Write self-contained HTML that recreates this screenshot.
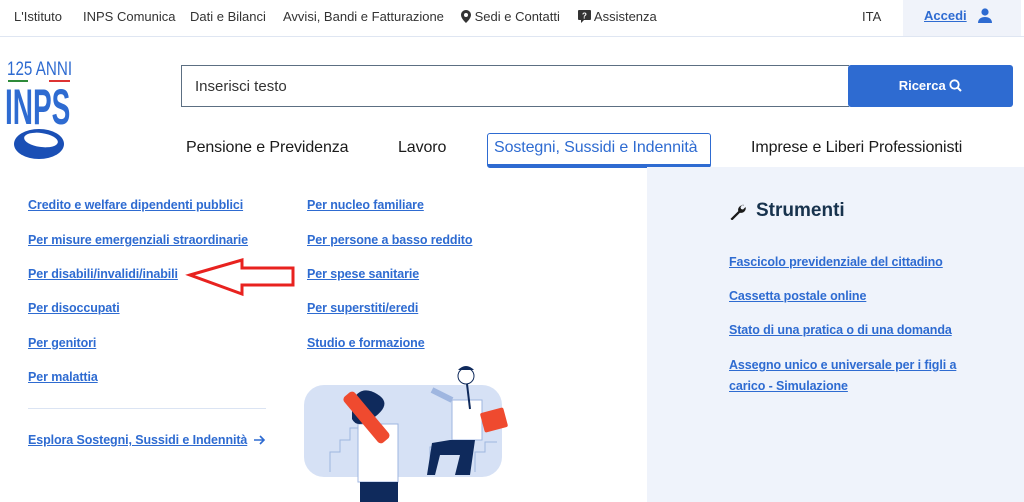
<!DOCTYPE html>
<html><head><meta charset="utf-8"><style>
*{margin:0;padding:0;box-sizing:border-box}
body{width:1024px;height:502px;overflow:hidden;background:#fff;font-family:"Liberation Sans",sans-serif;position:relative;color:#1a1a1a}
.a{position:absolute;white-space:nowrap}
.top{font-size:13px;color:#333;top:9px}
.lk{font-size:12.5px;font-weight:bold;color:#2e6bd1;text-decoration:underline;letter-spacing:-0.1px}
.nav{font-size:16px;color:#1a1a1a;top:139px;letter-spacing:-0.1px}
</style></head><body>
<div class="a" style="left:0;top:36px;width:1024px;height:1px;background:#dfe6f2"></div>
<div class="a" style="left:903px;top:0;width:118px;height:36px;background:#f0f3fa"></div>
<div class="a top" style="left:14px">L'Istituto</div>
<div class="a top" style="left:83px">INPS Comunica</div>
<div class="a top" style="left:190px">Dati e Bilanci</div>
<div class="a top" style="left:283px">Avvisi, Bandi e Fatturazione</div>
<div class="a top" style="left:461px"><svg width="10" height="13" viewBox="0 0 10 13" style="vertical-align:-2px"><path d="M5 0C2.2 0 0 2.2 0 5c0 3.5 5 8 5 8s5-4.5 5-8C10 2.2 7.8 0 5 0zm0 7a2 2 0 110-4 2 2 0 010 4z" fill="#333"/></svg> Sedi e Contatti</div>
<div class="a top" style="left:578px"><svg width="13" height="13" viewBox="0 0 13 13" style="vertical-align:-2px"><path d="M1 0h11a1 1 0 011 1v8a1 1 0 01-1 1H6l-3 3v-3H1a1 1 0 01-1-1V1a1 1 0 011-1z" fill="#333"/><text x="6.5" y="8.5" font-size="8" fill="#fff" text-anchor="middle" font-weight="bold">?</text></svg> Assistenza</div>
<div class="a top" style="left:862px">ITA</div>
<div class="a" style="left:924px;top:8px;font-size:13px;font-weight:bold;color:#2e6bd1;text-decoration:underline">Accedi</div>
<svg class="a" style="left:978px;top:8px" width="14" height="15" viewBox="0 0 14 15"><circle cx="7" cy="4" r="3.6" fill="#2e6bd1"/><path d="M0 15c0-4 3-6 7-6s7 2 7 6z" fill="#2e6bd1"/></svg>
<!-- logo -->
<div class="a" style="left:7px;top:60px;font-size:19px;line-height:19px;color:#2e6bd1;transform:scaleX(0.8);transform-origin:left">125 ANNI</div>
<div class="a" style="left:8px;top:80px;width:20px;height:2px;background:#2e8b3a"></div>
<div class="a" style="left:49px;top:80px;width:21px;height:2px;background:#d33"></div>
<div class="a" style="left:5px;top:82px;font-size:50px;font-weight:bold;color:#2e6bd1;line-height:50px;transform:scaleX(0.56);transform-origin:left">INPS</div>
<svg class="a" style="left:12px;top:127px" width="54" height="35" viewBox="0 0 54 35"><ellipse cx="27" cy="17" rx="25" ry="15" fill="#1a4fb5"/><ellipse cx="29" cy="13" rx="17" ry="7" fill="#fff" transform="rotate(8 29 13)"/></svg>
<!-- search -->
<div class="a" style="left:181px;top:65px;width:668px;height:42px;border:1px solid #5c6f82;border-right:none;font-size:15px;color:#333;padding:12px 0 0 13px">Inserisci testo</div>
<div class="a" style="left:848px;top:65px;width:165px;height:42px;background:#2e6bd1;border-radius:3px;color:#fff;font-weight:bold;font-size:13px;text-align:center;padding-top:13px">Ricerca <svg width="13" height="13" viewBox="0 0 13 13" style="vertical-align:-2px"><circle cx="5.5" cy="5.5" r="4.2" stroke="#fff" stroke-width="1.8" fill="none"/><path d="M8.5 8.5l3.5 3.5" stroke="#fff" stroke-width="2"/></svg></div>
<!-- nav -->
<div class="a nav" style="left:186px">Pensione e Previdenza</div>
<div class="a nav" style="left:398px">Lavoro</div>
<div class="a" style="left:487px;top:133px;width:224px;height:35px;border:1px solid #2e6bd1;border-radius:3px;border-bottom:4px solid #2e6bd1"></div>
<div class="a nav" style="left:494px;color:#2e6bd1">Sostegni, Sussidi e Indennità</div>
<div class="a nav" style="left:751px">Imprese e Liberi Professionisti</div>
<!-- right panel -->
<div class="a" style="left:647px;top:167px;width:377px;height:335px;background:#eff3fb"></div>
<svg class="a" style="left:729px;top:203px" width="17" height="17" viewBox="0 0 17 17"><path d="M15 2.5a4.5 4.5 0 00-5.7 5.6L1.5 15.9l1.6 1.6 7.8-7.8A4.5 4.5 0 0016.5 4l-2.5 2.5-2-0.5-.5-2L14 1.5z" fill="#1a1a1a"/></svg>
<div class="a" style="left:756px;top:200px;font-size:19px;font-weight:bold;color:#17324d">Strumenti</div>
<div class="a lk" style="left:729px;top:255px">Fascicolo previdenziale del cittadino</div>
<div class="a lk" style="left:729px;top:289px">Cassetta postale online</div>
<div class="a lk" style="left:729px;top:323px">Stato di una pratica o di una domanda</div>
<div class="a lk" style="left:729px;top:358px">Assegno unico e universale per i figli a</div>
<div class="a lk" style="left:729px;top:379px">carico - Simulazione</div>
<!-- left links -->
<div class="a lk" style="left:28px;top:198px">Credito e welfare dipendenti pubblici</div>
<div class="a lk" style="left:28px;top:233px">Per misure emergenziali straordinarie</div>
<div class="a lk" style="left:28px;top:267px">Per disabili/invalidi/inabili</div>
<div class="a lk" style="left:28px;top:301px">Per disoccupati</div>
<div class="a lk" style="left:28px;top:336px">Per genitori</div>
<div class="a lk" style="left:28px;top:370px">Per malattia</div>
<div class="a" style="left:28px;top:408px;width:238px;height:1px;background:#dbe4f3"></div>
<div class="a lk" style="left:28px;top:433px">Esplora Sostegni, Sussidi e Indennità</div>
<svg class="a" style="left:253px;top:434px" width="13" height="12" viewBox="0 0 13 12"><path d="M1 6h10M7 2l4 4-4 4" stroke="#2e6bd1" stroke-width="1.6" fill="none"/></svg>
<div class="a lk" style="left:307px;top:198px">Per nucleo familiare</div>
<div class="a lk" style="left:307px;top:233px">Per persone a basso reddito</div>
<div class="a lk" style="left:307px;top:267px">Per spese sanitarie</div>
<div class="a lk" style="left:307px;top:301px">Per superstiti/eredi</div>
<div class="a lk" style="left:307px;top:336px">Studio e formazione</div>
<!-- arrow -->
<svg class="a" style="left:185px;top:255px" width="115" height="42" viewBox="0 0 115 42"><path d="M5 20L57 5v8h51v17H57v9z" fill="none" stroke="#e8221f" stroke-width="3" stroke-linejoin="miter"/></svg>
<!-- illustration -->
<svg class="a" style="left:300px;top:362px" width="210" height="140" viewBox="0 0 210 140">
<rect x="4" y="23" width="198" height="92" rx="20" fill="#d6e1f5"/>
<path d="M30 110v-20h10v-12h10v-12h10" stroke="#9fb6e0" fill="none"/>
<path d="M130 110v-25h10" stroke="#9fb6e0" fill="none"/>
<path d="M175 110v-20h10v-10h12" stroke="#9fb6e0" fill="none"/>
<rect x="58" y="62" width="40" height="58" fill="#fff" stroke="#9fb6e0"/>
<rect x="60" y="120" width="38" height="20" fill="#0f2a5c"/>
<path d="M52 40q8-18 25-8t-5 25q-15 10-20 0z" fill="#0f2a5c"/>
<rect x="48" y="26" width="14" height="60" rx="4" fill="#ef4a2f" transform="rotate(-40 60 40)"/>
<path d="M152 38h30v40h-30z" fill="#fff" stroke="#9fb6e0"/>
<circle cx="166" cy="14" r="8" fill="#fff" stroke="#0f2a5c"/>
<path d="M158 8q8-8 16 0z" fill="#0f2a5c"/>
<path d="M150 78h25l-5 35h-15l5-20h-20l-5 20h-8l5-32z" fill="#0f2a5c"/>
<path d="M132 28q10 5 20 10" stroke="#9fb6e0" stroke-width="6"/>
<rect x="182" y="48" width="24" height="20" rx="2" fill="#ef4a2f" transform="rotate(-15 194 58)"/>
<path d="M167 22l3 25" stroke="#0f2a5c" stroke-width="2"/>
</svg>
</body></html>
